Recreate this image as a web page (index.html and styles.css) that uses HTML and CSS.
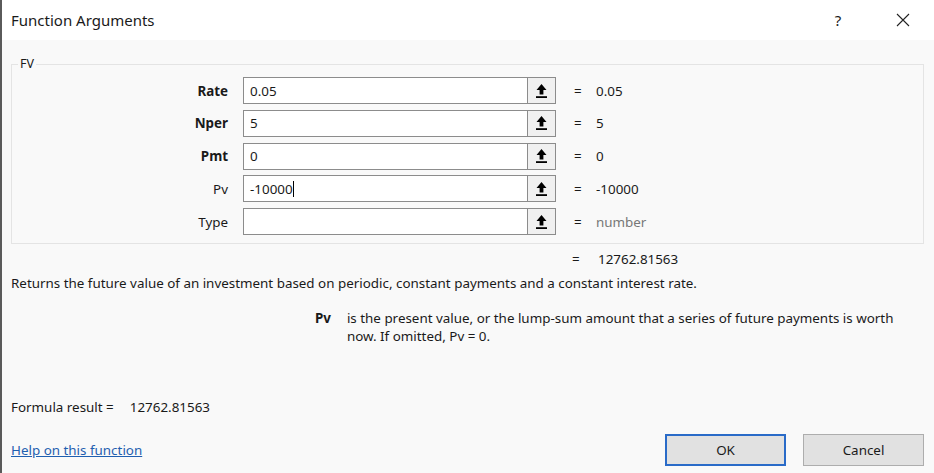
FILE: index.html
```html
<!DOCTYPE html>
<html>
<head>
<meta charset="utf-8">
<link rel="stylesheet" href="styles.css">
</head>
<body>
<div class="window">
  <div class="titlebar">
    <div class="title">Function Arguments</div>
    <div class="help">?</div>
    <div class="close">
      <svg width="14" height="14" viewBox="0 0 14 14"><path d="M1 1L13 13M13 1L1 13" stroke="#222" stroke-width="1.1" fill="none"/></svg>
    </div>
  </div>
  <div class="body">
    <fieldset class="group">
      <legend>FV</legend>
      <div class="args">
        <div class="lbl bold">Rate</div><div class="inp">0.05</div><div class="btn"><svg width="13" height="16" viewBox="0 0 13 16"><path d="M6.5 1L1.5 7H4.6V11.6H8.4V7H11.5Z" fill="#000"/><rect x="1" y="13.2" width="11" height="1.8" fill="#000"/></svg></div><div class="eq">=</div><div class="val">0.05</div>
        <div class="lbl bold">Nper</div><div class="inp">5</div><div class="btn"><svg width="13" height="16" viewBox="0 0 13 16"><path d="M6.5 1L1.5 7H4.6V11.6H8.4V7H11.5Z" fill="#000"/><rect x="1" y="13.2" width="11" height="1.8" fill="#000"/></svg></div><div class="eq">=</div><div class="val">5</div>
        <div class="lbl bold">Pmt</div><div class="inp">0</div><div class="btn"><svg width="13" height="16" viewBox="0 0 13 16"><path d="M6.5 1L1.5 7H4.6V11.6H8.4V7H11.5Z" fill="#000"/><rect x="1" y="13.2" width="11" height="1.8" fill="#000"/></svg></div><div class="eq">=</div><div class="val">0</div>
        <div class="lbl">Pv</div><div class="inp">-10000<span class="caret"></span></div><div class="btn"><svg width="13" height="16" viewBox="0 0 13 16"><path d="M6.5 1L1.5 7H4.6V11.6H8.4V7H11.5Z" fill="#000"/><rect x="1" y="13.2" width="11" height="1.8" fill="#000"/></svg></div><div class="eq">=</div><div class="val">-10000</div>
        <div class="lbl">Type</div><div class="inp"></div><div class="btn"><svg width="13" height="16" viewBox="0 0 13 16"><path d="M6.5 1L1.5 7H4.6V11.6H8.4V7H11.5Z" fill="#000"/><rect x="1" y="13.2" width="11" height="1.8" fill="#000"/></svg></div><div class="eq">=</div><div class="val muted">number</div>
      </div>
    </fieldset>
    <div class="result"><span class="eq">=</span><span class="val">12762.81563</span></div>
    <div class="desc">Returns the future value of an investment based on periodic, constant payments and a constant interest rate.</div>
    <div class="argdesc">
      <div class="argname">Pv</div>
      <div class="argtext">is the present value, or the lump-sum amount that a series of future payments is worth<br>now. If omitted, Pv = 0.</div>
    </div>
    <div class="formula"><span>Formula result =</span><span class="fval">12762.81563</span></div>
    <div class="footer">
      <a class="link" href="#">Help on this function</a>
      <div class="buttons">
        <div class="button ok">OK</div>
        <div class="button">Cancel</div>
      </div>
    </div>
  </div>
</div>
</body>
</html>
```

FILE: styles.css
```css
* { box-sizing: border-box; }
html, body { margin: 0; padding: 0; }
body {
  font-family: "Noto Sans", "Open Sans", sans-serif;
  font-size: 13.4px;
  color: #1a1a1a;
  background: #f9f9f9;
}
.window {
  width: 934px;
  height: 473px;
  border-left: 2px solid #5a5a5a;
  background: #f9f9f9;
  display: flex;
  flex-direction: column;
}
.titlebar {
  height: 40px;
  background: #fff;
  display: flex;
  align-items: center;
  padding-left: 9px;
}
.title {
  font-size: 15px;
  color: #1a1a1a;
  flex: 1;
}
.help {
  font-size: 15px;
  width: 20px;
  margin-right: 48px;
  text-align: center;
}
.close {
  width: 14px;
  margin-right: 24px;
  display: flex;
}
.body {
  padding: 0 9px;
  display: flex;
  flex-direction: column;
}
.group {
  margin: 18px 0 0 0;
  padding: 19px 0 6px 0;
  border: 1px solid #e4e4e4;
  width: 913px;
  height: 186px;
}
.group legend {
  padding: 0 2px;
  margin-left: 6px;
  font-size: 12.5px;
  line-height: 12px;
}
.args {
  display: grid;
  grid-template-columns: 231px 284px 29px 40px auto;
  grid-auto-rows: 27px;
  row-gap: 5.75px;
  margin-top: -12px;
}
.lbl {
  text-align: right;
  padding-right: 15px;
  align-self: center;
}
.lbl.bold { font-weight: bold; }
.inp {
  border: 1px solid #8c8c8c;
  border-right: none;
  background: #fff;
  display: flex;
  align-items: center;
  padding-left: 6px;
}
.caret {
  display: inline-block;
  width: 1px;
  height: 16px;
  background: #000;
}
.btn {
  border: 1px solid #8c8c8c;
  background: #f0f0f0;
  display: flex;
  align-items: center;
  justify-content: center;
}
.eq {
  align-self: center;
  padding-left: 18px;
}
.val { align-self: center; }
.val.muted { color: #777; }
.result {
  display: flex;
  height: 30px;
  align-items: center;
  padding-left: 561px;
}
.result .eq { padding-left: 0; width: 26px; }
.desc {
  height: 20px;
  line-height: 20px;
  margin-top: -1px;
}
.argdesc {
  display: flex;
  margin-top: 16px;
  padding-left: 304px;
  line-height: 18px;
}
.argname { font-weight: bold; width: 32px; }
.argtext { width: 580px; white-space: nowrap; }
.formula {
  margin-top: 53px;
  display: flex;
  line-height: 18px;
}
.fval { margin-left: 16px; }
.footer {
  margin-top: 18px;
  display: flex;
  align-items: center;
  justify-content: space-between;
}
.link {
  color: #1f5fb0;
  text-decoration: underline;
}
.buttons { display: flex; gap: 17px; margin-right: 1px; }
.button {
  width: 121px;
  height: 32px;
  border: 1px solid #adadad;
  background: #e1e1e1;
  display: flex;
  align-items: center;
  justify-content: center;
}
.button.ok { border: 2px solid #2a6bc8; }
```
